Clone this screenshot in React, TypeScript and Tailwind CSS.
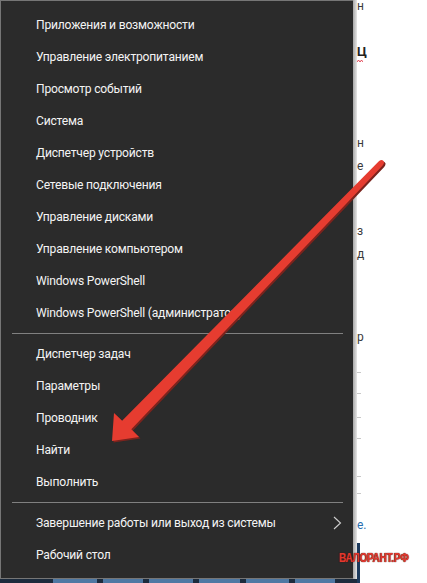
import React from "react";

const groupA = [
  "Приложения и возможности",
  "Управление электропитанием",
  "Просмотр событий",
  "Система",
  "Диспетчер устройств",
  "Сетевые подключения",
  "Управление дисками",
  "Управление компьютером",
  "Windows PowerShell",
  "Windows PowerShell (администратор)",
];
const groupB = ["Диспетчер задач", "Параметры", "Проводник", "Найти", "Выполнить"];

function Item({ label, chevron }: { label: string; chevron?: boolean }) {
  return (
    <div className="h-[32px] flex items-center pl-[35px] pr-[10px] text-[12.1px] tracking-[-0.2px] text-[#f4f4f4] whitespace-nowrap">
      <span className="flex-1">{label}</span>
      {chevron && (
        <svg width="9" height="14" viewBox="0 0 9 14" className="mr-[1px]">
          <path d="M1 1 L7.5 7 L1 13" fill="none" stroke="#cfcfcf" strokeWidth="1.1" />
        </svg>
      )}
    </div>
  );
}

function Sep() {
  return (
    <div className="h-[9px] flex items-center pl-[11px] pr-[10px]">
      <div className="h-px w-full bg-[#808080]" />
    </div>
  );
}

function Taskbar() {
  const segs = [44, 40, 44, 41, 43, 40];
  return (
    <div className="h-[4px] w-[360px] bg-[#1c2b3d] flex gap-[6px] pl-[53px]">
      {segs.map((w, i) => (
        <div key={i} className="h-[4px] bg-[#4f78a3]" style={{ width: w }} />
      ))}
    </div>
  );
}

export default function App() {
  return (
    <div
      className="relative w-[427px] h-[583px] bg-white overflow-hidden"
      style={{ fontFamily: 'Roboto, "Noto Sans", sans-serif' }}
    >
      <div className="flex">
        <div className="w-[353px] h-[579px] bg-[#2b2b2b] border-l border-t border-b border-[#767676] pt-[8px] flex flex-col">
          {groupA.map((l) => (
            <Item key={l} label={l} />
          ))}
          <Sep />
          {groupB.map((l) => (
            <Item key={l} label={l} />
          ))}
          <Sep />
          <Item label="Завершение работы или выход из системы" chevron />
          <Item label="Рабочий стол" />
        </div>
        <div className="w-[4px] h-[579px] bg-gradient-to-r from-[#a8a8a8] to-[#e6e6e6]" />
        <div className="relative w-[12px] h-[579px] text-[#3a3a3a] text-[12px] leading-none">
          {/* fragments of the document behind */}
          <span className="absolute left-0 top-[0px]">н</span>
          <span className="absolute left-0 top-[45px] text-[13px] font-bold text-[#222]">Ц</span>
          <svg className="absolute left-[0px] top-[59px]" width="6" height="4" viewBox="0 0 6 4">
            <path d="M0 3 L1.5 1 L3 3 L4.5 1 L6 3" stroke="#d23" strokeWidth="0.8" fill="none" />
          </svg>
          <span className="absolute left-0 top-[137px]">н</span>
          <span className="absolute left-0 top-[160px]">е</span>
          <span className="absolute left-0 top-[225px]">з</span>
          <span className="absolute left-0 top-[248px]">д</span>
          <span className="absolute left-0 top-[331px]">р</span>
          {[372, 393, 417, 438, 476, 493].map((y) => (
            <div key={y} className="absolute left-0 w-[4px] h-px bg-[#c8c8c8]" style={{ top: y }} />
          ))}
          <span className="absolute left-0 top-[519px] text-[#2a6fb0]">е.</span>
          <div className="absolute left-0 top-[543px] w-[3px] h-[40px] bg-[#1d3a5c]" />
        </div>
      </div>
      <Taskbar />
      <span
        className="absolute left-[339px] top-[551px] inline-block origin-left [transform:scaleX(0.77)] text-[13px] font-black tracking-[-0.3px] text-[#e3392f] leading-none whitespace-nowrap"
        style={{
          fontFamily: '"Liberation Sans", Arial, sans-serif',
          textShadow: "0 0 1px #5a1410, 0 0 1px #5a1410",
        }}
      >
        ВАЛОРАНТ.РФ
      </span>
      <svg className="absolute left-0 top-0 pointer-events-none" width="427" height="583" viewBox="0 0 427 583">
        <path
          d="M113.5 442.5 L115.5 414.5 L123.6 422.3 L380.6 162.6 Q384 160 385.6 163.6 Q385.6 165.5 384.2 167 L132.8 430.7 L140.5 438.5 Z"
          fill="#7c231d"
        />
        <path
          d="M112 441 L114 413 L122.1 420.8 L379.1 161.1 Q382.5 158.5 384.1 162.1 Q384.1 164 382.7 165.5 L131.3 429.2 L139 437 Z"
          fill="#e63c30"
        />
      </svg>
    </div>
  );
}
